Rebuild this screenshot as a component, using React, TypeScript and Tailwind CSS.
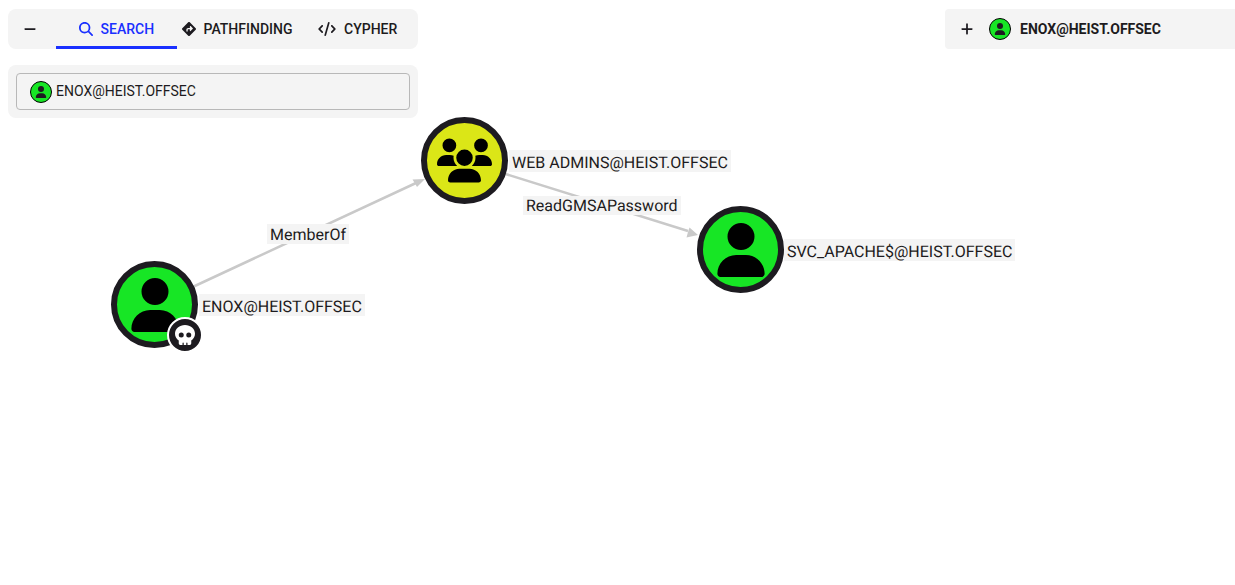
import { useState } from "react";
import {
  FaCode,
  FaDiamondTurnRight,
  FaMagnifyingGlass,
  FaMinus,
  FaPlus,
  FaSkull,
  FaUser,
  FaUsers,
} from "react-icons/fa6";

const tabs = [
  { name: "SEARCH", icon: <FaMagnifyingGlass className="size-3.5" /> },
  { name: "PATHFINDING", icon: <FaDiamondTurnRight className="size-3.5" /> },
  { name: "CYPHER", icon: <FaCode className="h-3.5 w-[18px]" /> },
];

function UserBadge() {
  return (
    <span className="flex size-[22px] shrink-0 items-center justify-center rounded-full border border-black bg-[#17e625] text-[#1d1b20]">
      <FaUser className="size-3" />
    </span>
  );
}

function SearchPanel() {
  const [active, setActive] = useState("SEARCH");
  const [open, setOpen] = useState(true);
  const [query, setQuery] = useState("ENOX@HEIST.OFFSEC");

  return (
    <section className="relative flex w-[410px] max-w-full flex-col gap-4">
      <div className="flex h-10 overflow-hidden rounded-lg bg-[#f4f4f4]">
        <button
          type="button"
          aria-label="Toggle search panel"
          aria-expanded={open}
          onClick={() => setOpen(!open)}
          className="flex w-12 shrink-0 items-center pl-[15px]"
        >
          <FaMinus className="size-3.5" />
        </button>
        <div role="tablist" className="flex flex-1">
          {tabs.map((tab) => (
            <button
              key={tab.name}
              type="button"
              role="tab"
              aria-selected={active === tab.name}
              onClick={() => setActive(tab.name)}
              className={
                active === tab.name
                  ? "relative flex flex-1 basis-0 items-center justify-center gap-2 text-sm font-medium text-[#1a30ff] after:absolute after:inset-x-0 after:bottom-0 after:h-[3px] after:bg-[#1a30ff]"
                  : "relative flex flex-1 basis-0 items-center justify-center gap-2 text-sm font-medium"
              }
            >
              {tab.icon}
              {tab.name}
            </button>
          ))}
        </div>
      </div>
      {open && (
        <div className="rounded-lg bg-[#f4f4f4] p-2">
          <label className="flex h-[37px] items-center gap-1 rounded border border-[#b8b8b8] px-[13px]">
            <UserBadge />
            <input
              type="text"
              aria-label="Search nodes"
              value={query}
              onChange={(event) => setQuery(event.target.value)}
              className="min-w-0 flex-1 bg-transparent pb-0.5 text-sm outline-none"
            />
          </label>
        </div>
      )}
    </section>
  );
}

function Graph() {
  const circle =
    "absolute flex size-[87px] items-center justify-center rounded-full border-[6px] border-[#1d1b20] text-black";
  const label =
    "absolute bg-[#f4f4f4] px-[3px] text-base leading-[19px] whitespace-nowrap [text-rendering:geometricPrecision]";

  return (
    <div className="absolute inset-0 overflow-hidden">
      <svg className="absolute inset-0 size-full" fill="#c9c9c9" stroke="#c9c9c9" aria-hidden="true">
        <path d="M154 305 416 183M464 161 688 231" strokeWidth="2.5" fill="none" />
        <path d="M425 179 417 187 415 183.500 412.500 179.500ZM698 235 686.500 237.500 688 232 689.500 227.500Z" stroke="none" />
      </svg>

      <span className={`${label} top-[224px] left-[267px] pt-px`}>MemberOf</span>
      <span className={`${label} top-[196px] left-[523px]`}>ReadGMSAPassword</span>

      <span className={`${label} top-[294px] left-[199px] pt-[3px]`}>ENOX@HEIST.OFFSEC</span>
      <span className={`${label} top-[150px] left-[509px] pt-[3px]`}>WEB ADMINS@HEIST.OFFSEC</span>
      <span className={`${label} top-[239px] left-[784px] pt-[3px]`}>SVC_APACHE$@HEIST.OFFSEC</span>

      <button type="button" aria-label="ENOX user" className={`${circle} top-[261px] left-[111px] bg-[#17e625]`}>
        <FaUser className="size-[54px]" />
        <span className="absolute -right-[11px] -bottom-[11px] flex size-9 items-center justify-center rounded-full border-2 border-white bg-[#1d1b20] text-white">
          <FaSkull className="size-5" />
        </span>
      </button>
      <button type="button" aria-label="WEB ADMINS group" className={`${circle} top-[117px] left-[421px] bg-[#dbe617]`}>
        <FaUsers className="size-[55px]" />
      </button>
      <button type="button" aria-label="SVC_APACHE$ user" className={`${circle} top-[206px] left-[697px] bg-[#17e625]`}>
        <FaUser className="size-[54px]" />
      </button>
    </div>
  );
}

export default function App() {
  return (
    <main className="relative min-h-screen bg-white font-[Roboto,sans-serif] text-[#1d1b20]">
      <Graph />
      <div className="flex items-start justify-between pt-[9px] pl-2">
        <SearchPanel />
        <aside className="relative flex h-10 w-[290px] items-center rounded-l bg-[#f4f4f4] pl-[15px]">
          <button type="button" aria-label="Expand entity details" className="mr-[15px]">
            <FaPlus className="size-3.5" />
          </button>
          <UserBadge />
          <h1 className="ml-[9px] text-sm font-bold">ENOX@HEIST.OFFSEC</h1>
        </aside>
      </div>
    </main>
  );
}
